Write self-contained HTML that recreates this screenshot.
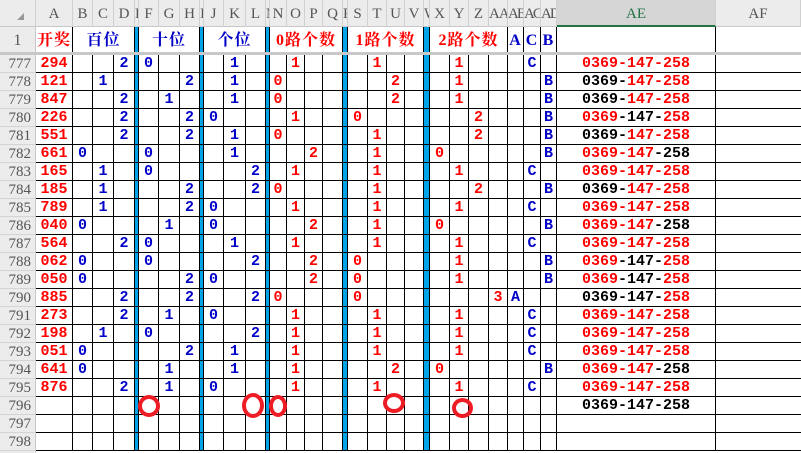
<!DOCTYPE html>
<html><head><meta charset="utf-8"><style>
*{margin:0;padding:0;box-sizing:border-box}
html,body{width:801px;height:453px;overflow:hidden;background:#fff}
body{position:relative;font-family:"Liberation Mono",monospace}
#ch{position:absolute;left:0;top:0;width:801px;height:27px;background:#ececec;border-bottom:1px solid #c8c8c8}
#ch div{position:absolute;top:0;height:27px;border-right:1px solid #d0d0d0;color:#555;font-family:"Liberation Serif",serif;font-size:15px;line-height:29px;text-align:center;overflow:hidden;white-space:nowrap}
#rh{position:absolute;left:0;top:27px;width:36px;height:426px;background:#ececec;border-right:1px solid #c8c8c8}
#rh div{height:18px;border-bottom:1px solid #d4d4d4;color:#555;font-family:"Liberation Serif",serif;font-size:15px;line-height:18px;text-align:right;padding-right:4px}
#rh div.r1{height:28px;line-height:28px;font-size:16px;text-align:center;padding:0}
#g{position:absolute;left:36px;top:27px;width:765px;background:#000;display:grid;gap:1px;padding-bottom:1px;
grid-template-columns:36px 19px 20px 20px 3px 19px 20px 19px 3px 19px 21px 19px 3px 16px 17px 17px 19px 4px 19px 18px 17px 18px 5px 19px 18px 19px 18px 15px 16px 15px 158px 85px;
grid-template-rows:27px repeat(22,17px)}
#g>*{background:#fff;font-weight:bold;font-size:15px;line-height:18px;text-align:center;font-style:normal;text-decoration:none;overflow:hidden;white-space:nowrap}
#g>q{background:#00a2e8}
q::before,q::after{content:none}
#g>b{color:#0000c8}
#g>em{color:#f00}
#g>p{color:#f00;font-size:15px}
#g>p span{color:#000}
.h{font-family:"Liberation Serif","Noto Serif CJK SC","Noto Sans CJK SC",serif;font-size:16px!important;line-height:27px!important;letter-spacing:1px}
.hr{color:#f00}.hb{color:#0000c8}
#sep{position:absolute;left:0;top:52px;width:801px;height:3px;background:#c8c8c8}
.c{position:absolute;border:4px solid #ee1c24;border-radius:50%}
</style></head><body>
<div id="ch">
<div style="left:0;width:36px"><span style="position:absolute;left:17px;top:13px;width:0;height:0;border-left:7px solid transparent;border-bottom:7px solid #999"></span></div>
<div style="left:36px;width:37px">A</div>
<div style="left:73px;width:20px">B</div>
<div style="left:93px;width:21px">C</div>
<div style="left:114px;width:21px">D</div>
<div style="left:135px;width:4px">E</div>
<div style="left:139px;width:20px">F</div>
<div style="left:159px;width:21px">G</div>
<div style="left:180px;width:20px">H</div>
<div style="left:200px;width:4px">I</div>
<div style="left:204px;width:20px">J</div>
<div style="left:224px;width:22px">K</div>
<div style="left:246px;width:20px">L</div>
<div style="left:266px;width:4px">M</div>
<div style="left:270px;width:17px">N</div>
<div style="left:287px;width:18px">O</div>
<div style="left:305px;width:18px">P</div>
<div style="left:323px;width:20px">Q</div>
<div style="left:343px;width:5px">R</div>
<div style="left:348px;width:20px">S</div>
<div style="left:368px;width:19px">T</div>
<div style="left:387px;width:18px">U</div>
<div style="left:405px;width:19px">V</div>
<div style="left:424px;width:6px">W</div>
<div style="left:430px;width:20px">X</div>
<div style="left:450px;width:19px">Y</div>
<div style="left:469px;width:20px">Z</div>
<div style="left:489px;width:19px;letter-spacing:-1px">AA</div>
<div style="left:508px;width:16px;letter-spacing:-2px">AB</div>
<div style="left:524px;width:17px;letter-spacing:-2px">AC</div>
<div style="left:541px;width:16px;letter-spacing:-2px">AD</div>
<div style="left:557px;width:159px;background:#d6d6d6;color:#217346;border-bottom:2px solid #217346">AE</div>
<div style="left:716px;width:85px">AF</div>
</div>
<div id="rh">
<div class="r1">1</div>
<div>777</div><div>778</div><div>779</div><div>780</div><div>781</div><div>782</div><div>783</div><div>784</div><div>785</div><div>786</div><div>787</div><div>788</div><div>789</div><div>790</div><div>791</div><div>792</div><div>793</div><div>794</div><div>795</div><div>796</div><div>797</div><div>798</div>
</div>
<div id="g">
<em class="h hr">开奖</em><b class="h hb" style="grid-column:span 3">百位</b><q></q><b class="h hb" style="grid-column:span 3">十位</b><q></q><b class="h hb" style="grid-column:span 3">个位</b><q></q><em class="h hr" style="grid-column:span 4">0路个数</em><q></q><em class="h hr" style="grid-column:span 4">1路个数</em><q></q><em class="h hr" style="grid-column:span 4">2路个数</em><b class="h hb">A</b><b class="h hb">C</b><b class="h hb">B</b><i></i><i></i>

<em>294</em><i></i><i></i><b>2</b><q></q><b>0</b><i></i><i></i><q></q><i></i><b>1</b><i></i><q></q><i></i><em>1</em><i></i><i></i><q></q><i></i><em>1</em><i></i><i></i><q></q><i></i><em>1</em><i></i><i></i><i></i><b>C</b><i></i><p>0369-147-258</p><i></i>
<em>121</em><i></i><b>1</b><i></i><q></q><i></i><i></i><b>2</b><q></q><i></i><b>1</b><i></i><q></q><em>0</em><i></i><i></i><i></i><q></q><i></i><i></i><em>2</em><i></i><q></q><i></i><em>1</em><i></i><i></i><i></i><i></i><b>B</b><p><span>0369-</span>147-258</p><i></i>
<em>847</em><i></i><i></i><b>2</b><q></q><i></i><b>1</b><i></i><q></q><i></i><b>1</b><i></i><q></q><em>0</em><i></i><i></i><i></i><q></q><i></i><i></i><em>2</em><i></i><q></q><i></i><em>1</em><i></i><i></i><i></i><i></i><b>B</b><p><span>0369-</span>147-258</p><i></i>
<em>226</em><i></i><i></i><b>2</b><q></q><i></i><i></i><b>2</b><q></q><b>0</b><i></i><i></i><q></q><i></i><em>1</em><i></i><i></i><q></q><em>0</em><i></i><i></i><i></i><q></q><i></i><i></i><em>2</em><i></i><i></i><i></i><b>B</b><p>0369<span>-147-</span>258</p><i></i>
<em>551</em><i></i><i></i><b>2</b><q></q><i></i><i></i><b>2</b><q></q><i></i><b>1</b><i></i><q></q><em>0</em><i></i><i></i><i></i><q></q><i></i><em>1</em><i></i><i></i><q></q><i></i><i></i><em>2</em><i></i><i></i><i></i><b>B</b><p><span>0369-</span>147-258</p><i></i>
<em>661</em><b>0</b><i></i><i></i><q></q><b>0</b><i></i><i></i><q></q><i></i><b>1</b><i></i><q></q><i></i><i></i><em>2</em><i></i><q></q><i></i><em>1</em><i></i><i></i><q></q><em>0</em><i></i><i></i><i></i><i></i><i></i><b>B</b><p>0369-147<span>-258</span></p><i></i>
<em>165</em><i></i><b>1</b><i></i><q></q><b>0</b><i></i><i></i><q></q><i></i><i></i><b>2</b><q></q><i></i><em>1</em><i></i><i></i><q></q><i></i><em>1</em><i></i><i></i><q></q><i></i><em>1</em><i></i><i></i><i></i><b>C</b><i></i><p>0369-147-258</p><i></i>
<em>185</em><i></i><b>1</b><i></i><q></q><i></i><i></i><b>2</b><q></q><i></i><i></i><b>2</b><q></q><em>0</em><i></i><i></i><i></i><q></q><i></i><em>1</em><i></i><i></i><q></q><i></i><i></i><em>2</em><i></i><i></i><i></i><b>B</b><p><span>0369-</span>147-258</p><i></i>
<em>789</em><i></i><b>1</b><i></i><q></q><i></i><i></i><b>2</b><q></q><b>0</b><i></i><i></i><q></q><i></i><em>1</em><i></i><i></i><q></q><i></i><em>1</em><i></i><i></i><q></q><i></i><em>1</em><i></i><i></i><i></i><b>C</b><i></i><p>0369-147-258</p><i></i>
<em>040</em><b>0</b><i></i><i></i><q></q><i></i><b>1</b><i></i><q></q><b>0</b><i></i><i></i><q></q><i></i><i></i><em>2</em><i></i><q></q><i></i><em>1</em><i></i><i></i><q></q><em>0</em><i></i><i></i><i></i><i></i><i></i><b>B</b><p>0369-147<span>-258</span></p><i></i>
<em>564</em><i></i><i></i><b>2</b><q></q><b>0</b><i></i><i></i><q></q><i></i><b>1</b><i></i><q></q><i></i><em>1</em><i></i><i></i><q></q><i></i><em>1</em><i></i><i></i><q></q><i></i><em>1</em><i></i><i></i><i></i><b>C</b><i></i><p>0369-147-258</p><i></i>
<em>062</em><b>0</b><i></i><i></i><q></q><b>0</b><i></i><i></i><q></q><i></i><i></i><b>2</b><q></q><i></i><i></i><em>2</em><i></i><q></q><em>0</em><i></i><i></i><i></i><q></q><i></i><em>1</em><i></i><i></i><i></i><i></i><b>B</b><p>0369<span>-147-</span>258</p><i></i>
<em>050</em><b>0</b><i></i><i></i><q></q><i></i><i></i><b>2</b><q></q><b>0</b><i></i><i></i><q></q><i></i><i></i><em>2</em><i></i><q></q><em>0</em><i></i><i></i><i></i><q></q><i></i><em>1</em><i></i><i></i><i></i><i></i><b>B</b><p>0369<span>-147-</span>258</p><i></i>
<em>885</em><i></i><i></i><b>2</b><q></q><i></i><i></i><b>2</b><q></q><i></i><i></i><b>2</b><q></q><em>0</em><i></i><i></i><i></i><q></q><em>0</em><i></i><i></i><i></i><q></q><i></i><i></i><i></i><em>3</em><b>A</b><i></i><i></i><p><span>0369-147-</span>258</p><i></i>
<em>273</em><i></i><i></i><b>2</b><q></q><i></i><b>1</b><i></i><q></q><b>0</b><i></i><i></i><q></q><i></i><em>1</em><i></i><i></i><q></q><i></i><em>1</em><i></i><i></i><q></q><i></i><em>1</em><i></i><i></i><i></i><b>C</b><i></i><p>0369-147-258</p><i></i>
<em>198</em><i></i><b>1</b><i></i><q></q><b>0</b><i></i><i></i><q></q><i></i><i></i><b>2</b><q></q><i></i><em>1</em><i></i><i></i><q></q><i></i><em>1</em><i></i><i></i><q></q><i></i><em>1</em><i></i><i></i><i></i><b>C</b><i></i><p>0369-147-258</p><i></i>
<em>051</em><b>0</b><i></i><i></i><q></q><i></i><i></i><b>2</b><q></q><i></i><b>1</b><i></i><q></q><i></i><em>1</em><i></i><i></i><q></q><i></i><em>1</em><i></i><i></i><q></q><i></i><em>1</em><i></i><i></i><i></i><b>C</b><i></i><p>0369-147-258</p><i></i>
<em>641</em><b>0</b><i></i><i></i><q></q><i></i><b>1</b><i></i><q></q><i></i><b>1</b><i></i><q></q><i></i><em>1</em><i></i><i></i><q></q><i></i><i></i><em>2</em><i></i><q></q><em>0</em><i></i><i></i><i></i><i></i><i></i><b>B</b><p>0369-147<span>-258</span></p><i></i>
<em>876</em><i></i><i></i><b>2</b><q></q><i></i><b>1</b><i></i><q></q><b>0</b><i></i><i></i><q></q><i></i><em>1</em><i></i><i></i><q></q><i></i><em>1</em><i></i><i></i><q></q><i></i><em>1</em><i></i><i></i><i></i><b>C</b><i></i><p>0369-147-258</p><i></i>
<i></i><i></i><i></i><i></i><q></q><i></i><i></i><i></i><q></q><i></i><i></i><i></i><q></q><i></i><i></i><i></i><i></i><q></q><i></i><i></i><i></i><i></i><q></q><i></i><i></i><i></i><i></i><i></i><i></i><i></i><p><span>0369-147-258</span></p><i></i>
<i></i><i></i><i></i><i></i><q></q><i></i><i></i><i></i><q></q><i></i><i></i><i></i><q></q><i></i><i></i><i></i><i></i><q></q><i></i><i></i><i></i><i></i><q></q><i></i><i></i><i></i><i></i><i></i><i></i><i></i><i></i><i></i>
<i></i><i></i><i></i><i></i><q></q><i></i><i></i><i></i><q></q><i></i><i></i><i></i><q></q><i></i><i></i><i></i><i></i><q></q><i></i><i></i><i></i><i></i><q></q><i></i><i></i><i></i><i></i><i></i><i></i><i></i><i></i><i></i>
</div>
<div id="sep"></div>
<div class="c" style="left:138px;top:395px;width:22px;height:22px"></div>
<div class="c" style="left:242px;top:393px;width:22px;height:25px"></div>
<div class="c" style="left:269px;top:395px;width:18px;height:22px"></div>
<div class="c" style="left:383px;top:393px;width:22px;height:20px"></div>
<div class="c" style="left:452px;top:398px;width:21px;height:20px"></div>
</body></html>
